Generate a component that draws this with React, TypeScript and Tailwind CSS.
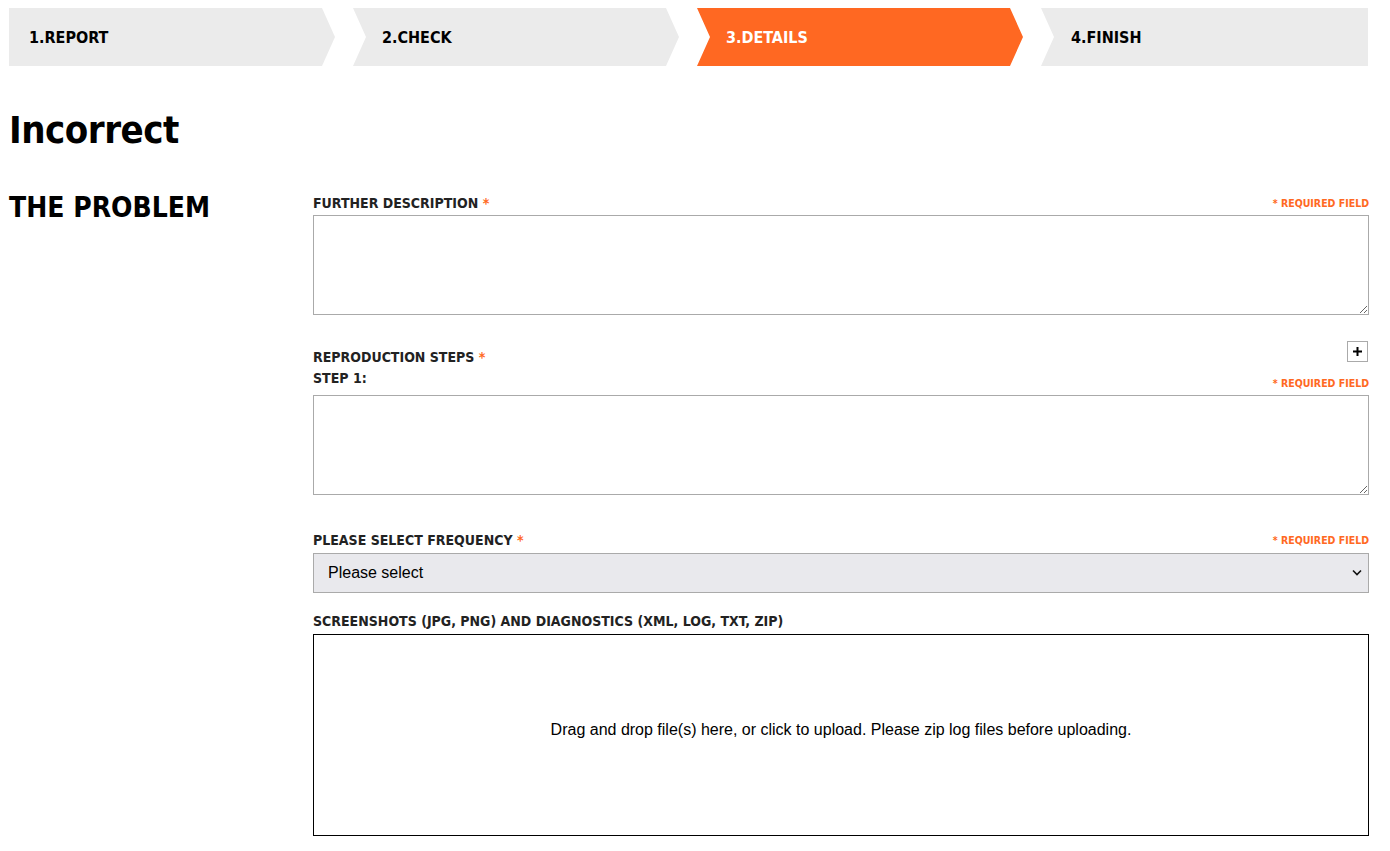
import React from "react";

const din = "font-['DejaVu_Sans_Condensed','DejaVu_Sans',sans-serif]";

const steps = [
  { label: "1.REPORT", active: false, clip: "[clip-path:polygon(0_0,calc(100%-13px)_0,100%_50%,calc(100%-13px)_100%,0_100%)]" },
  { label: "2.CHECK", active: false, clip: "[clip-path:polygon(0_0,calc(100%-13px)_0,100%_50%,calc(100%-13px)_100%,0_100%,13px_50%)]" },
  { label: "3.DETAILS", active: true, clip: "[clip-path:polygon(0_0,calc(100%-13px)_0,100%_50%,calc(100%-13px)_100%,0_100%,13px_50%)]" },
  { label: "4.FINISH", active: false, clip: "[clip-path:polygon(0_0,100%_0,100%_100%,0_100%,13px_50%)]" },
];

function Required() {
  return (
    <span className={`${din} text-[10.5px] font-bold text-[#ff6822] leading-[14px]`}>* REQUIRED FIELD</span>
  );
}

function Label({ children, star = true }: { children: React.ReactNode; star?: boolean }) {
  return (
    <span className={`${din} text-[14px] font-bold text-[#222]`}>
      {children}
      {star && <span className="text-[#ff6822]"> *</span>}
    </span>
  );
}

export default function App() {
  return (
    <div className="bg-white min-h-[851px] px-[9px] pt-[8px] text-black">
      <div className="w-[1360px]">
        <div className="flex gap-[18px]">
          {steps.map((s, i) => (
            <div
              key={s.label}
              className={`${s.clip} h-[58px] flex items-center pt-[1px] ${
                i === 3 ? "w-[327px] pl-[30px]" : "w-[326px]"
              } ${i === 0 ? "pl-[20px]" : i !== 3 ? "pl-[29px]" : ""} ${
                s.active ? "bg-[#ff6822] text-white" : "bg-[#ebebeb] text-black"
              }`}
            >
              <span className={`${din} text-[16px] font-bold`}>{s.label}</span>
            </div>
          ))}
        </div>

        <h1 className={`${din} text-[38px] font-bold leading-none tracking-[-0.5px] mt-[45px]`}>Incorrect</h1>

        <div className="flex mt-[45px]">
          <div className="w-[304px] shrink-0">
            <h2 className={`${din} text-[28px] font-bold leading-none`}>THE PROBLEM</h2>
          </div>
          <div className="flex-1 flex flex-col pt-[1px]">
            <div className="flex items-center justify-between h-[16px] leading-[16px]">
              <Label>FURTHER DESCRIPTION</Label>
              <Required />
            </div>
            <textarea className="block mt-[4px] w-full h-[100px] border border-[#aaaaaa] outline-none resize-y" />

            <div className="flex items-start justify-between mt-[26px]">
              <div className="flex flex-col leading-[21px] pt-[6px]">
                <Label>REPRODUCTION STEPS</Label>
                <Label star={false}>STEP 1:</Label>
              </div>
              <div className="flex flex-col items-end">
                <button className="w-[21px] h-[21px] border border-[#aaaaaa] bg-white flex items-center justify-center mr-[1px]">
                  <svg width="9" height="9" viewBox="0 0 9 9">
                    <path d="M4.5 0v9M0 4.5h9" stroke="#000" strokeWidth="2" />
                  </svg>
                </button>
                <div className="mt-[14px] h-[14px] leading-[14px] flex items-center">
                  <Required />
                </div>
              </div>
            </div>
            <textarea className="block mt-[5px] w-full h-[100px] border border-[#aaaaaa] outline-none resize-y" />

            <div className="flex items-center justify-between h-[16px] leading-[16px] mt-[37px]">
              <Label>PLEASE SELECT FREQUENCY</Label>
              <Required />
            </div>
            <div className="relative mt-[5px]">
              <select className="appearance-none block w-full h-[40px] bg-[#e9e9ed] border border-[#aaaaaa] pl-[14px] pr-[30px] font-['Liberation_Sans',Arial,sans-serif] text-[16px] text-black outline-none">
                <option>Please select</option>
              </select>
              <svg
                className="absolute right-[7px] top-[16px] pointer-events-none"
                width="10"
                height="7"
                viewBox="0 0 10 7"
              >
                <path d="M1 1.5l4 4 4-4" fill="none" stroke="#111" strokeWidth="1.6" />
              </svg>
            </div>

            <div className="h-[16px] leading-[16px] flex items-center mt-[20px]">
              <Label star={false}>SCREENSHOTS (JPG, PNG) AND DIAGNOSTICS (XML, LOG, TXT, ZIP)</Label>
            </div>
            <div className="mt-[5px] h-[202px] border border-black flex items-center justify-center pb-[10px]">
              <span className="font-['Liberation_Sans',Arial,sans-serif] text-[16px] text-black">
                Drag and drop file(s) here, or click to upload. Please zip log files before uploading.
              </span>
            </div>
          </div>
        </div>
      </div>
    </div>
  );
}
